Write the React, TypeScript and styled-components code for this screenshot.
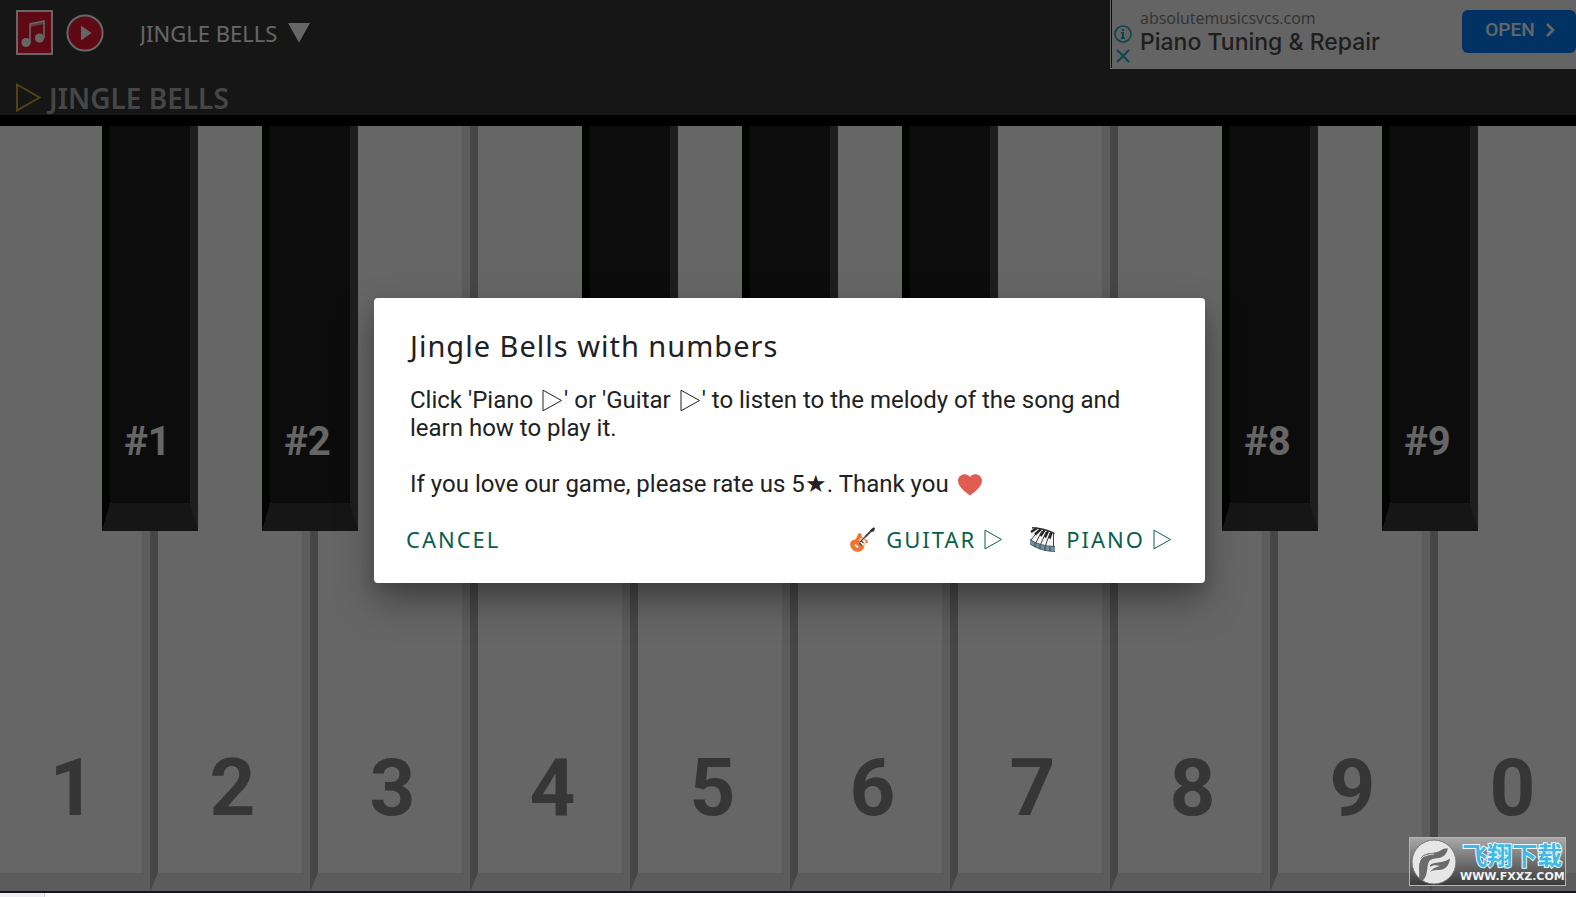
import React from "react";
import styled, { createGlobalStyle } from "styled-components";

const humanist = `"Noto Sans", "Open Sans", sans-serif`;
const body = `Roboto, "Liberation Sans", sans-serif`;

const GlobalStyle = createGlobalStyle`
  * { box-sizing: border-box; }
  body { margin: 0; background: #fff; font-family: ${body}; }
  button, select { font: inherit; color: inherit; background: none; border: 0; padding: 0; margin: 0; cursor: pointer; }
  h1, h2, p { margin: 0; }
`;

const Page = styled.div`
  display: flex;
  flex-direction: column;
  min-height: 100vh;
`;

const Stage = styled.main`
  position: relative;
  flex: 1;
  display: flex;
  flex-direction: column;
  overflow: hidden;
  border-bottom: 2px solid #14151f;
  background: #000;
`;

const Header = styled.header`
  display: flex;
  justify-content: space-between;
  align-items: flex-start;
  background: #383838;
`;

const Toolbar = styled.div`
  display: flex;
  align-items: center;
  height: 66px;
  padding-left: 16px;
`;

const IconButton = styled.button`
  display: flex;
  margin-right: 12px;
`;

const SongPicker = styled.label`
  display: flex;
  align-items: center;
  margin-left: 24px;
  color: #fff;
  font-family: ${humanist};
  font-size: 22px;
  line-height: 32px;
`;

const SongSelect = styled.select`
  appearance: none;
  outline: none;
  margin-right: 10px;
`;

const Ad = styled.aside`
  display: flex;
  width: 466px;
  height: 69px;
  border-left: 1px solid #fff;
  border-bottom: 1px solid #fff;
  background: #fafafa;
  box-shadow: inset 1px 0 #222;
`;

const AdChoices = styled.div`
  display: flex;
  flex-direction: column;
  gap: 5px;
  padding: 25px 8px 0 3px;
`;

const AdCopy = styled.a`
  flex: 1;
  color: #4c4c4c;
  font-family: "Open Sans", sans-serif;
  text-decoration: none;
  padding-top: 8px;
`;

const AdDomain = styled.div`
  font-size: 16px;
  line-height: 20px;
  color: #808080;
`;

const AdTitle = styled.div`
  font-family: Inter, sans-serif;
  font-size: 23px;
  font-weight: 500;
  line-height: 28px;
`;

const AdButton = styled.button`
  display: flex;
  align-items: center;
  justify-content: center;
  gap: 10px;
  width: 114px;
  height: 43px;
  margin-top: 10px;
  padding-left: 2px;
  padding-bottom: 4px;
  border-radius: 6px;
  background: #0080fa;
  color: #fff;
  font-size: 19px;
  font-weight: 500;
`;

const NowPlaying = styled.div`
  display: flex;
  align-items: center;
  gap: 8px;
  height: 46px;
  padding: 11px 0 0 16px;
  background: #383838;
`;

const SongTitle = styled.h1`
  font-family: ${humanist};
  font-size: 28px;
  font-weight: 600;
  line-height: 32px;
  color: #b0b0b0;
`;

const Keyboard = styled.div`
  flex: 1;
  display: grid;
  grid-template-columns: repeat(10, 1fr);
  margin: 11px -14px 0 -10px;
`;

const KeySlot = styled.div`
  position: relative;
  display: flex;
`;

const WhiteKey = styled.button`
  flex: 1;
  display: flex;
  align-items: flex-end;
  justify-content: center;
  padding: 0 0 38px 5px;
  border-style: solid;
  border-width: 0 8px 18px 8px;
  border-color: #e5e5e5 #e5e5e5 #e5e5e5 #b0b0b0;
  background: #fff;
  color: #888;
  font-size: 80px;
  font-weight: 700;
  line-height: 94px;
`;

const BlackKey = styled.button`
  position: absolute;
  z-index: 1;
  top: 0;
  right: 0;
  width: 60%;
  height: 53%;
  transform: translateX(50%);
  display: flex;
  align-items: flex-end;
  justify-content: center;
  padding-bottom: 37px;
  border-style: solid;
  border-width: 0 8px 28px 8px;
  border-color: #383838 #4c4c4c #383838 #060c06;
  background: #1f1f1f;
  color: #fff;
  font-size: 40px;
  font-weight: 700;
  line-height: 48px;
`;

const BlackLabel = styled.span`
  margin-right: 5px;
`;

const Backdrop = styled.div`
  position: absolute;
  inset: 0;
  z-index: 2;
  display: flex;
  align-items: center;
  justify-content: center;
  padding: 0 0 10px 3px;
  background: rgba(0, 0, 0, 0.6);
`;

const Dialog = styled.section`
  width: 831px;
  max-width: 90%;
  padding: 28px 32px 22px;
  border-radius: 4px;
  background: #fff;
  color: #212121;
  box-shadow: 0 18px 38px rgba(0, 0, 0, 0.34), 0 8px 14px rgba(0, 0, 0, 0.1);
`;

const DialogTitle = styled.h2`
  padding: 0 4px;
  font-family: ${humanist};
  font-size: 29px;
  font-weight: 400;
  line-height: 40px;
  letter-spacing: 1px;
`;

const Message = styled.p`
  padding: 0 4px;
  margin-top: 20px;
  font-size: 24px;
  line-height: 28px;

  & + & {
    margin-top: 28px;
  }
`;

const Inline = styled.svg`
  margin: 0 1px 0 3px;
  vertical-align: -4px;
`;

const Actions = styled.div`
  display: flex;
  gap: 26px;
  margin-top: 19px;
`;

const Action = styled.button<{ $first?: boolean }>`
  display: flex;
  align-items: center;
  gap: 5px;
  height: 44px;
  margin-right: ${(p) => (p.$first ? "auto" : "0")};
  color: #0b5e4c;
  font-family: ${humanist};
  font-size: 22px;
  letter-spacing: 2px;
`;

const ActionIcon = styled.svg`
  width: 25px;
  height: 25px;
  margin-right: 6px;
`;

const Watermark = styled.div`
  position: absolute;
  z-index: 3;
  right: 10px;
  bottom: 5px;
  display: flex;
  align-items: center;
  gap: 3px;
  width: 157px;
  height: 49px;
  padding-left: 1px;
  border: 1px solid #b5b5b5;
  background: linear-gradient(#a8a8a8, #3a3a3a);
`;

const Brand = styled.div`
  text-align: center;
`;

const BrandName = styled.div`
  font-family: "Noto Sans CJK SC", sans-serif;
  font-size: 25px;
  font-weight: 700;
  line-height: 28px;
  color: #3fb9e6;
  -webkit-text-stroke: 2px #e8f8ff;
  paint-order: stroke fill;
`;

const BrandUrl = styled.div`
  margin-top: 2px;
  font-family: "DejaVu Sans", sans-serif;
  font-size: 11px;
  font-weight: 700;
  line-height: 14px;
  color: #f2f2f2;
`;

const Footer = styled.footer`
  width: 45px;
  height: 4px;
  border-right: 1px solid #d0d0d0;
  background: #f0f0f0;
`;

const OutlineTriangle = ({ w, h }: { w: number; h: number }) => (
  <Inline width={w} height={h} viewBox={`0 0 ${w} ${h}`} role="img" aria-label="play">
    <path d={`M1 1.2 L${w - 1.5} ${h / 2} L1 ${h - 1.2}Z`} fill="none" stroke="currentColor" strokeWidth="1" />
  </Inline>
);

const MusicIcon = () => (
  <svg width="38" height="46" viewBox="0 0 38 46">
    <rect x="1" y="1" width="35" height="43" fill="#eb1730" stroke="#fff" strokeWidth="2" />
    <path d="M14 33V14L28 11V28" fill="none" stroke="#fff" strokeWidth="1.6" />
    <path d="M14 14L28 11V14L14 17Z" fill="#fff" opacity=".55" />
    <circle cx="10" cy="32.5" r="4.6" fill="#fff" />
    <circle cx="23.5" cy="28" r="4.6" fill="#fff" />
  </svg>
);

const PlayIcon = () => (
  <svg width="38" height="38" viewBox="0 0 38 38">
    <circle cx="19" cy="19" r="17.6" fill="#eb1730" stroke="#fff" strokeWidth="2" />
    <path d="M15 11.5L25.5 19L15 26.5Z" fill="#fff" />
  </svg>
);

const GuitarIcon = () => (
  <ActionIcon viewBox="0 0 25 25">
    <path d="M15 10L22 3" stroke="#4b4544" strokeWidth="2" />
    <path d="M20 3.2L23.5 .3L25 1.3L24 4.2L21.5 5Z" fill="#2f2f33" />
    <path d="M8.5 6.5C10.500 5.500 12 7 11.700 9.5L16.500 13C18.500 13.500 18.5 16.500 16 15.800C14.500 16.500 14.300 18.500 14 20C13 25 6 26.5 2.5 22.5C-1.5 18 0 13.500 4 12.800C7.500 12 6.500 8.500 8.5 6.5Z" fill="#f0742e" />
    <path d="M9 12.500L12 10.500L16 14.500L13 19L10.5 17Z" fill="#f8eee5" />
    <path d="M10 15L15 10M9.500 16L12 18.500M11 13.500L13.500 16" stroke="#444" strokeWidth="1.1" />
    <path d="M5 17.5L8 20.500" stroke="#f8eee5" strokeWidth="2" />
  </ActionIcon>
);

const PianoIcon = () => (
  <ActionIcon viewBox="0 0 25 25">
    <path d="M1 1L24 7V20Q9 19 1 13Z" fill="#f5f5f5" />
    <path d="M0 12.5Q9 19 25 19.5V24.5Q10 24 0 17Z" fill="#6f929f" />
    <path d="M0 12.5Q9 19 25 19.5M0 17Q10 24 25 24.5" fill="none" stroke="#45616c" strokeWidth="1" />
    <path d="M9 3L1 13M12 4L6 15.5M16 5L10.5 17.5M20 6L15.5 18.5M23.5 6V19.5M5 15.5V20M10 18V22.5M15 19V24M20 19.5V24.5" stroke="#444" strokeWidth="1" />
    <path d="M7 1L1 5M11 2L5 7.500M14.5 3L10.500 9M18 4L15 10.500M21.5 5.5L19.500 11.5" stroke="#252525" strokeWidth="2.4" />
    <path d="M2 .8Q13 1 24.5 6.5" fill="none" stroke="#333" strokeWidth="1.5" />
  </ActionIcon>
);

const HeartIcon = () => (
  <Inline width="24" height="22" viewBox="0 0 24 22" role="img" aria-label="heart">
    <path d="M12 21.5C8 18.5 0 13 0 6.5C0 0 9 -2 12 3C15 -2 24 0 24 6.5C24 13 16 18.5 12 21.5Z" fill="#e05d52" />
  </Inline>
);

const BrandMark = () => (
  <svg width="46" height="46" viewBox="0 0 46 46">
    <circle cx="23" cy="23" r="22" fill="#e6e6e6" stroke="#777" strokeWidth="1" />
    <path d="M8 39C9 34 7 28 9 22C11 13 19 15 26 13C31 11.5 31 9 37 9.5C35 18 30 19 24 19.5C16 20 17 27 16 32C15 38 13 41 11 42Z" fill="#6b6b6b" />
    <path d="M19 26C25 22 31 25 39 19.5C38 27 34 31 28 31C25 31 22 31 19 33C21 30 24 28 29 27C25 26 22 26 19 28Z" fill="#6b6b6b" />
    <path d="M8 24C10 16 17 16 23 15" fill="none" stroke="#e6e6e6" strokeWidth="1" />
  </svg>
);

const keys: { label: string; black?: boolean; sharp?: string }[] = [
  { label: "1", black: true, sharp: "#1" },
  { label: "2", black: true, sharp: "#2" },
  { label: "3" },
  { label: "4", black: true },
  { label: "5", black: true },
  { label: "6", black: true },
  { label: "7" },
  { label: "8", black: true, sharp: "#8" },
  { label: "9", black: true, sharp: "#9" },
  { label: "0" },
];

export default function App() {
  return (
    <Page>
      <GlobalStyle />
      <Stage>
        <Header>
          <Toolbar>
            <IconButton aria-label="Songs"><MusicIcon /></IconButton>
            <IconButton aria-label="Play"><PlayIcon /></IconButton>
            <SongPicker>
              <SongSelect aria-label="Song">
                <option>JINGLE BELLS</option>
              </SongSelect>
              <svg width="22" height="20" viewBox="0 0 22 20"><path d="M0 0H22L11 19.5Z" fill="#fff" /></svg>
            </SongPicker>
          </Toolbar>
          <Ad>
            <AdChoices>
              <svg width="18" height="18" viewBox="0 0 18 18" fill="none" stroke="#20a8c8" strokeWidth="1.6">
                <circle cx="9" cy="9" r="8" />
                <path d="M9 4V6M7 8H9V13M7 13H11" strokeWidth="2" />
              </svg>
              <svg width="18" height="16" viewBox="0 0 18 16" fill="none" stroke="#20a8c8" strokeWidth="2">
                <path d="M3 2L15 14M15 2L3 14" />
              </svg>
            </AdChoices>
            <AdCopy href="#ad">
              <AdDomain>absolutemusicsvcs.com</AdDomain>
              <AdTitle>Piano Tuning &amp; Repair</AdTitle>
            </AdCopy>
            <AdButton>
              OPEN
              <svg width="10" height="14" viewBox="0 0 10 14"><path d="M2 1L8 7L2 13" fill="none" stroke="#fff" strokeWidth="2.6" /></svg>
            </AdButton>
          </Ad>
        </Header>
        <NowPlaying>
          <svg width="25" height="29" viewBox="0 0 25 29"><path d="M1 1.5L23.5 14.5L1 27.5Z" fill="none" stroke="#d0a828" strokeWidth="2" /></svg>
          <SongTitle>JINGLE BELLS</SongTitle>
        </NowPlaying>
        <Keyboard>
          {keys.map((k) => (
            <KeySlot key={k.label}>
              <WhiteKey>{k.label}</WhiteKey>
              {k.black && (
                <BlackKey>
                  {k.sharp && <BlackLabel>{k.sharp}</BlackLabel>}
                </BlackKey>
              )}
            </KeySlot>
          ))}
        </Keyboard>
        <Backdrop>
          <Dialog role="dialog" aria-labelledby="song-dialog-title">
            <DialogTitle id="song-dialog-title">Jingle Bells with numbers</DialogTitle>
            <Message>
              Click 'Piano <OutlineTriangle w={21} h={23} />' or 'Guitar <OutlineTriangle w={21} h={23} />' to listen to the melody of the song and learn how to play it.
            </Message>
            <Message>
              If you love our game, please rate us 5★. Thank you <HeartIcon />
            </Message>
            <Actions>
              <Action $first>CANCEL</Action>
              <Action><GuitarIcon />GUITAR <OutlineTriangle w={19} h={21} /></Action>
              <Action><PianoIcon />PIANO <OutlineTriangle w={19} h={21} /></Action>
            </Actions>
          </Dialog>
        </Backdrop>
        <Watermark>
          <BrandMark />
          <Brand>
            <BrandName>飞翔下载</BrandName>
            <BrandUrl>WWW.FXXZ.COM</BrandUrl>
          </Brand>
        </Watermark>
      </Stage>
      <Footer />
    </Page>
  );
}
